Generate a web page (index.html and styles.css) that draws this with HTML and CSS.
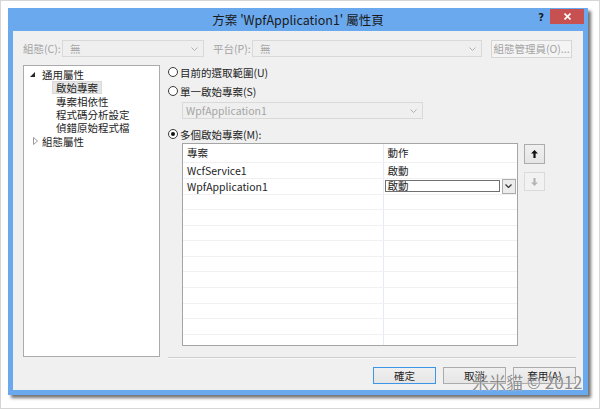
FILE: index.html
```html
<!DOCTYPE html>
<html lang="zh-Hant">
<head>
    <meta charset="UTF-8">
    <title>方案 'WpfApplication1' 屬性頁</title>
    <link rel="stylesheet" href="styles.css">
</head>
<body>
<div class="page">
    <div class="window">
        <div class="titlebar">
            <span class="title">方案 'WpfApplication1' 屬性頁</span>
            <div class="caption-btns">
                <span class="help">?</span>
                <span class="close">
                    <svg width="7" height="7" viewBox="0 0 7 7"><path d="M0.5 0.5 L6.5 6.5 M6.5 0.5 L0.5 6.5" stroke="#fff" stroke-width="1.6"/></svg>
                </span>
            </div>
        </div>

        <div class="client">
            <div class="config-row">
                <span class="dim-label">組態(C):</span>
                <div class="combo combo-config">
                    <span>無</span>
                    <svg class="chev" width="7" height="4" viewBox="0 0 7 4"><polyline points="0.5,0.5 3.5,3.5 6.5,0.5" fill="none" stroke="#b0b0b0"/></svg>
                </div>
                <span class="dim-label platform-label">平台(P):</span>
                <div class="combo combo-platform">
                    <span>無</span>
                    <svg class="chev" width="7" height="4" viewBox="0 0 7 4"><polyline points="0.5,0.5 3.5,3.5 6.5,0.5" fill="none" stroke="#b0b0b0"/></svg>
                </div>
                <button class="btn btn-disabled manager-btn">組態管理員(O)...</button>
            </div>

            <div class="main">
                <div class="tree">
                    <div class="tree-item">
                        <span class="tree-toggle">
                            <svg width="5" height="5" viewBox="0 0 5 5"><polygon points="5,0 5,5 0,5" fill="#262626"/></svg>
                        </span>
                        <span>通用屬性</span>
                    </div>
                    <div class="tree-item tree-child selected"><span>啟始專案</span></div>
                    <div class="tree-item tree-child"><span>專案相依性</span></div>
                    <div class="tree-item tree-child"><span>程式碼分析設定</span></div>
                    <div class="tree-item tree-child"><span>偵錯原始程式檔</span></div>
                    <div class="tree-item">
                        <span class="tree-toggle collapsed">
                            <svg width="5" height="8" viewBox="0 0 5 8"><polygon points="0.5,0.5 4.5,4 0.5,7.5" fill="none" stroke="#9a9a9a"/></svg>
                        </span>
                        <span>組態屬性</span>
                    </div>
                </div>

                <div class="pane">
                    <div class="radio"><span class="radio-dot"></span>目前的選取範圍(U)</div>
                    <div class="radio radio-2"><span class="radio-dot"></span>單一啟始專案(S)</div>
                    <div class="combo combo-single">
                        <span>WpfApplication1</span>
                        <svg class="chev" width="7" height="4" viewBox="0 0 7 4"><polyline points="0.5,0.5 3.5,3.5 6.5,0.5" fill="none" stroke="#b0b0b0"/></svg>
                    </div>
                    <div class="radio radio-3 checked"><span class="radio-dot"></span>多個啟始專案(M):</div>

                    <div class="grid-area">
                        <div class="grid">
                            <table>
                                <thead>
                                    <tr><th class="col-project">專案</th><th>動作</th></tr>
                                </thead>
                                <tbody>
                                    <tr><td class="col-project">WcfService1</td><td>啟動</td></tr>
                                    <tr>
                                        <td class="col-project">WpfApplication1</td>
                                        <td class="edit-cell">
                                            <div class="cell-combo">
                                                <span class="cell-input">啟動</span>
                                                <span class="cell-drop">
                                                    <svg width="7" height="4" viewBox="0 0 7 4"><polyline points="0.5,0.5 3.5,3.5 6.5,0.5" fill="none" stroke="#333" stroke-width="1.2"/></svg>
                                                </span>
                                            </div>
                                        </td>
                                    </tr>
                                    <tr><td class="col-project"></td><td></td></tr>
                                    <tr><td class="col-project"></td><td></td></tr>
                                    <tr><td class="col-project"></td><td></td></tr>
                                    <tr><td class="col-project"></td><td></td></tr>
                                    <tr><td class="col-project"></td><td></td></tr>
                                    <tr><td class="col-project"></td><td></td></tr>
                                    <tr><td class="col-project"></td><td></td></tr>
                                    <tr><td class="col-project"></td><td></td></tr>
                                    <tr><td class="col-project"></td><td></td></tr>
                                    <tr><td class="col-project"></td><td></td></tr>
                                </tbody>
                            </table>
                        </div>
                        <div class="move-btns">
                            <span class="move-btn">
                                <svg width="7" height="8" viewBox="0 0 7 8"><path d="M3.5 0 L7 3.6 H4.6 V8 H2.4 V3.6 H0 Z" fill="#111"/></svg>
                            </span>
                            <span class="move-btn disabled">
                                <svg width="7" height="8" viewBox="0 0 7 8"><path d="M3.5 8 L7 4.4 H4.6 V0 H2.4 V4.4 H0 Z" fill="#b4b4b4"/></svg>
                            </span>
                        </div>
                    </div>

                    <div class="separator"></div>
                </div>
            </div>

            <div class="footer">
                <button class="btn btn-default">確定</button>
                <button class="btn">取消</button>
                <button class="btn">套用(A)</button>
            </div>
        </div>
    </div>
    <div class="watermark">米米貓 © 2012</div>
</div>
</body>
</html>
```

FILE: styles.css
```css
* {
    box-sizing: border-box;
}

body {
    margin: 0;
    background: #fff;
    font-family: "Noto Sans CJK TC", "Noto Sans", sans-serif;
    font-size: 10.5px;
    color: #1e1e1e;
}

.page {
    position: relative;
    width: 600px;
    height: 409px;
    border: 1px solid #d6d6d6;
    padding: 7px;
}

.window {
    width: 580px;
    height: 387px;
    background: #6aa9ee;
    box-shadow: 3px 3px 3px rgba(0,0,0,0.55);
    display: flex;
    flex-direction: column;
}

/* title bar */
.titlebar {
    height: 23px;
    display: grid;
    grid-template-columns: 1fr auto 1fr;
    align-items: start;
}

.title {
    grid-column: 2;
    font-size: 12.5px;
    line-height: 23px;
    color: #1a1a1a;
    white-space: nowrap;
}

.caption-btns {
    grid-column: 3;
    justify-self: end;
    display: flex;
    align-items: flex-start;
}

.help {
    font-family: "DejaVu Sans", sans-serif;
    font-weight: bold;
    font-size: 10px;
    line-height: 16px;
    margin: 2px 6px 0 0;
    color: #1a1a1a;
}

.close {
    width: 34px;
    height: 15px;
    margin: 1px 4px 0 0;
    background: #c75050;
    display: flex;
    align-items: center;
    justify-content: center;
}

/* client area */
.client {
    flex: 1;
    margin: 0 5px 5px;
    background: #f0f0f0;
    padding: 9px 7px 6px 10px;
    display: flex;
    flex-direction: column;
}

.config-row {
    display: flex;
    align-items: center;
    height: 17px;
}

.dim-label {
    width: 39px;
    color: #a3a3a3;
    white-space: nowrap;
}

.platform-label {
    margin-left: 9px;
}

.combo {
    height: 17px;
    border: 1px solid #d9d9d9;
    background: #efefef;
    color: #a5a5a5;
    display: flex;
    align-items: center;
    justify-content: space-between;
    padding: 0 5px 0 7px;
}

.combo-config {
    width: 142px;
}

.combo-platform {
    width: 230px;
}

.btn {
    height: 17px;
    border: 1px solid #acacac;
    background: linear-gradient(#f0f0f0, #e5e5e5);
    font: inherit;
    color: #1e1e1e;
    padding: 0;
    display: flex;
    align-items: center;
    justify-content: center;
}

.btn-disabled {
    border-color: #d5d5d5;
    background: #f4f4f4;
    color: #a3a3a3;
}

.btn-default {
    border-color: #3d95e8;
}

.manager-btn {
    margin-left: 9px;
    width: 81px;
    height: 18px;
}

.main {
    display: flex;
    margin-top: 8px;
    height: 294px;
}

/* tree */
.tree {
    width: 137px;
    height: 292px;
    border: 1px solid #ababab;
    background: #fff;
    padding-top: 2px;
}

.tree-item {
    height: 13.3px;
    line-height: 11px;
    display: flex;
    align-items: center;
    white-space: nowrap;
}

.tree-toggle {
    width: 12px;
    margin-left: 6px;
    display: flex;
    align-items: center;
}

.tree-toggle.collapsed {
    padding-left: 3px;
}

.tree-child {
    padding-left: 28px;
}

.tree-child span {
    padding: 0 3px;
    border: 1px solid transparent;
}

.tree-child.selected span {
    background: #e6e6e6;
    border-color: #d9d9d9;
}

/* right pane */
.pane {
    flex: 1;
    margin-left: 8px;
    display: flex;
    flex-direction: column;
}

.radio {
    display: flex;
    align-items: center;
    height: 14px;
    white-space: nowrap;
}

.radio-2 {
    margin-top: 5px;
}

.radio-3 {
    margin-top: 8px;
}

.radio-dot {
    width: 10px;
    height: 10px;
    border: 1px solid #3a3a3a;
    border-radius: 50%;
    background: #fff;
    margin-right: 2px;
    display: flex;
    align-items: center;
    justify-content: center;
}

.radio.checked .radio-dot::after {
    content: "";
    width: 4px;
    height: 4px;
    border-radius: 50%;
    background: #111;
}

.combo-single {
    width: 241px;
    margin: 4px 0 0 14px;
    padding-left: 3px;
}

.grid-area {
    display: flex;
    margin: 2px 0 0 14px;
}

.grid {
    width: 336px;
    height: 203px;
    border: 1px solid #a5a5a5;
    background: #fff;
    overflow: hidden;
}

.grid table {
    width: 100%;
    border-collapse: collapse;
    table-layout: fixed;
}

.grid th,
.grid td {
    padding: 0 0 0 4px;
    text-align: left;
    font-weight: normal;
    border-bottom: 1px solid #f0f0f0;
    white-space: nowrap;
}

.grid th {
    height: 18px;
}

.grid td {
    height: 15.6px;
}

.grid .col-project {
    width: 200px;
    border-right: 1px solid #e4ebf4;
}

.grid .edit-cell {
    padding-left: 1px;
}

.cell-combo {
    display: flex;
    align-items: center;
}

.cell-input {
    width: 115px;
    height: 12px;
    border: 1px solid #707070;
    background: #fff;
    padding-left: 2px;
    line-height: 10px;
}

.cell-drop {
    width: 14px;
    height: 15px;
    margin-left: 2px;
    border: 1px solid #acacac;
    background: #ececec;
    display: flex;
    align-items: center;
    justify-content: center;
}

.move-btns {
    display: flex;
    flex-direction: column;
    gap: 8px;
    margin: 1px 0 0 6px;
}

.move-btn {
    width: 21px;
    height: 20px;
    border: 1px solid #acacac;
    background: linear-gradient(#f0f0f0, #e5e5e5);
    display: flex;
    align-items: center;
    justify-content: center;
}

.move-btn.disabled {
    height: 19px;
    border-color: #dadada;
    background: #f2f2f2;
}

.separator {
    margin-top: 11px;
    height: 2px;
    border-top: 1px solid #cdcdcd;
    border-bottom: 1px solid #fafafa;
}

.footer {
    display: flex;
    justify-content: flex-end;
    gap: 7px;
    margin-top: 8px;
}

.footer .btn {
    width: 63px;
}

.watermark {
    position: absolute;
    left: 471px;
    top: 371px;
    font-size: 17px;
    line-height: 20px;
    color: rgba(120,120,120,0.85);
    text-shadow: 0 0 1px #fff;
    white-space: nowrap;
}
```
